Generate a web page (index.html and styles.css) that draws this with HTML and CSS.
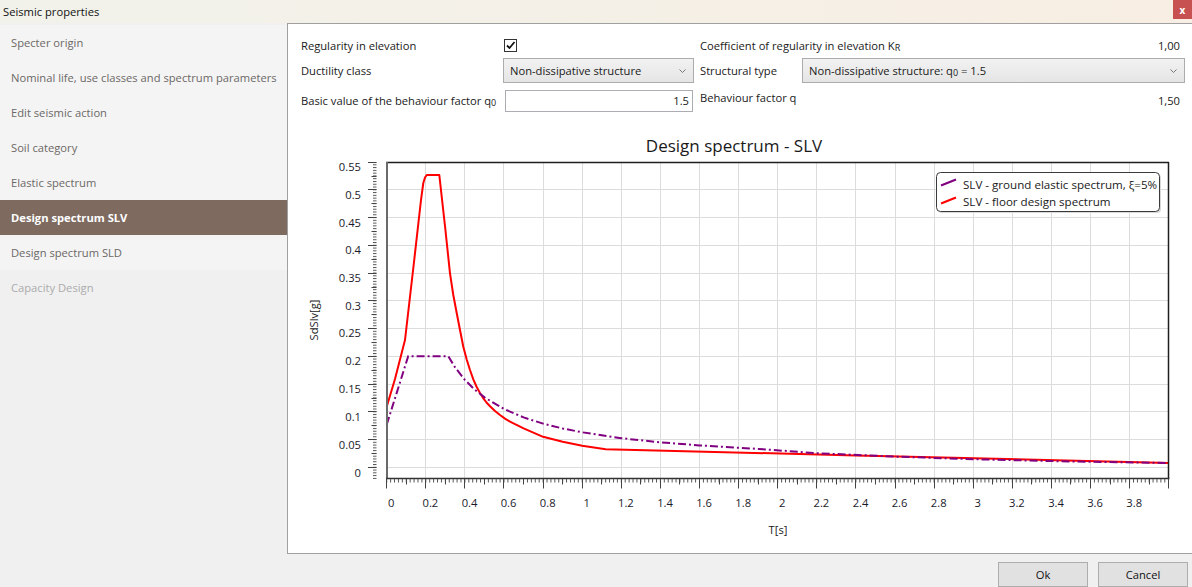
FILE: index.html
```html
<!DOCTYPE html>
<html>
<head>
<meta charset="utf-8">
<title>Seismic properties</title>
<link rel="stylesheet" href="styles.css">
</head>
<body>
<div class="window">
  <div class="titlebar">
    <span class="title">Seismic properties</span>
    <span class="close">x</span>
  </div>
  <div class="content">
    <nav class="sidebar">
      <div class="item">Specter origin</div>
      <div class="item">Nominal life, use classes and spectrum parameters</div>
      <div class="item">Edit seismic action</div>
      <div class="item">Soil category</div>
      <div class="item">Elastic spectrum</div>
      <div class="item selected">Design spectrum SLV</div>
      <div class="item">Design spectrum SLD</div>
      <div class="item disabled">Capacity Design</div>
    </nav>
    <main class="panel">
      <div class="form">
        <div class="label">Regularity in elevation</div>
        <div class="ctrl">
          <span class="checkbox"><svg width="11" height="11" viewBox="0 0 11 11"><path d="M2 5.5 L4.5 8 L9.5 2" fill="none" stroke="#111" stroke-width="1.8"/></svg></span>
        </div>
        <div class="label rlabel">Coefficient of regularity in elevation K<sub>R</sub></div>
        <div class="value">1,00</div>

        <div class="label">Ductility class</div>
        <div class="select"><span>Non-dissipative structure</span><svg class="chev" width="7" height="4" viewBox="0 0 7 4"><path d="M0.5 0.5 L3.5 3.5 L6.5 0.5" fill="none" stroke="#777" stroke-width="1"/></svg></div>
        <div class="label rlabel">Structural type</div>
        <div class="select wide"><span>Non-dissipative structure: q<sub>0</sub> = 1.5</span><svg class="chev" width="7" height="4" viewBox="0 0 7 4"><path d="M0.5 0.5 L3.5 3.5 L6.5 0.5" fill="none" stroke="#777" stroke-width="1"/></svg></div>

        <div class="label row3">Basic value of the behaviour factor q<sub>0</sub></div>
        <div class="input">1.5</div>
        <div class="label rlabel top">Behaviour factor q</div>
        <div class="value row3">1,50</div>
      </div>

      <svg class="chart" width="904" height="439" viewBox="288 113 904 439">
        <defs>
          <pattern id="yminor" patternUnits="userSpaceOnUse" x="0" y="466.8" width="10" height="2.775">
            <rect x="0" y="0" width="10" height="1" fill="#555"/>
          </pattern>
          <pattern id="xminor" patternUnits="userSpaceOnUse" x="386.2" y="0" width="3.91" height="10">
            <rect x="0" y="0" width="1" height="10" fill="#555"/>
          </pattern>
        </defs>

        <text class="ctitle" x="734" y="152" text-anchor="middle">Design spectrum - SLV</text>

        <path class="grid" d="M425.5 162V478M464.5 162V478M503.5 162V478M543.5 162V478M582.5 162V478M621.5 162V478M660.5 162V478M699.5 162V478M738.5 162V478M777.5 162V478M816.5 162V478M855.5 162V478M895.5 162V478M934.5 162V478M973.5 162V478M1012.5 162V478M1051.5 162V478M1090.5 162V478M1129.5 162V478M387 467.5H1169M387 439.5H1169M387 411.5H1169M387 384.5H1169M387 356.5H1169M387 328.5H1169M387 300.5H1169M387 273.5H1169M387 245.5H1169M387 217.5H1169M387 189.5H1169"/>

        <polyline class="red" points="386.7,406.8 395,379 405,340 414,262 421,200 423.3,183 425,177.5 426.7,175 439.3,175 445,226 450,273.3 453.3,295 456.7,313 460,330 463.3,346.7 466.7,359.5 470,370 473.3,379.3 476.7,387 480,393 483,397.8 486.5,402.5 490,406.3 495,411 500,415 505,418.6 510,421.7 523.6,428.4 543.1,436.8 562.7,441.8 582.2,445.7 605.7,449.3 855.9,455.4 1168.7,462.9"/>
        <polyline class="purple" points="386.7,424.6 408.2,356.3 448.3,356.3 455.1,367.4 464.9,379.9 474.7,389.6 484.5,397.4 504,409 523.6,417.4 543.1,423.6 562.7,428.5 582.2,432.3 621.3,438.2 660.4,442.3 699.5,445.4 758.2,448.9 816.8,453.2 895,456.6 973.2,459.2 1071,461.5 1168.7,463"/>

        <path class="frame" d="M386 162.5H1169M1168.5 162V478"/>
        <path class="frame-left" d="M387 162V478"/>
        <path class="xaxis" d="M386 478.5H1169.5"/>

        <rect x="373" y="162" width="3.5" height="317" fill="url(#yminor)"/>
        <path class="tick" d="M368 467.5H376.5M368 439.5H376.5M368 411.5H376.5M368 384.5H376.5M368 356.5H376.5M368 328.5H376.5M368 300.5H376.5M368 273.5H376.5M368 245.5H376.5M368 217.5H376.5M368 189.5H376.5M368 162.5H376.5M371.5 453.5H376.5M371.5 425.5H376.5M371.5 398.5H376.5M371.5 370.5H376.5M371.5 342.5H376.5M371.5 314.5H376.5M371.5 287.5H376.5M371.5 259.5H376.5M371.5 231.5H376.5M371.5 203.5H376.5M371.5 176.5H376.5"/>

        <rect x="386" y="479" width="783" height="3.5" fill="url(#xminor)"/>
        <path class="tick" d="M386.5 479V488.5M425.5 479V488.5M464.5 479V488.5M503.5 479V488.5M543.5 479V488.5M582.5 479V488.5M621.5 479V488.5M660.5 479V488.5M699.5 479V488.5M738.5 479V488.5M777.5 479V488.5M816.5 479V488.5M855.5 479V488.5M895.5 479V488.5M934.5 479V488.5M973.5 479V488.5M1012.5 479V488.5M1051.5 479V488.5M1090.5 479V488.5M1129.5 479V488.5M1168.5 479V488.5M406.5 479V484.5M445.5 479V484.5M484.5 479V484.5M523.5 479V484.5M562.5 479V484.5M601.5 479V484.5M640.5 479V484.5M679.5 479V484.5M719.5 479V484.5M758.5 479V484.5M797.5 479V484.5M836.5 479V484.5M875.5 479V484.5M914.5 479V484.5M953.5 479V484.5M992.5 479V484.5M1031.5 479V484.5M1070.5 479V484.5M1110.5 479V484.5M1149.5 479V484.5"/>

        <g class="ylabels" text-anchor="end">
          <text x="361" y="171">0.55</text>
          <text x="361" y="199">0.5</text>
          <text x="361" y="227">0.45</text>
          <text x="361" y="254">0.4</text>
          <text x="361" y="282">0.35</text>
          <text x="361" y="310">0.3</text>
          <text x="361" y="337">0.25</text>
          <text x="361" y="365">0.2</text>
          <text x="361" y="393">0.15</text>
          <text x="361" y="421">0.1</text>
          <text x="361" y="448.5">0.05</text>
          <text x="361" y="476.5">0</text>
        </g>
        <g class="xlabels" text-anchor="middle">
          <text x="391.3" y="507">0</text>
          <text x="430.4" y="507">0.2</text>
          <text x="469.5" y="507">0.4</text>
          <text x="508.6" y="507">0.6</text>
          <text x="547.7" y="507">0.8</text>
          <text x="586.8" y="507">1</text>
          <text x="625.9" y="507">1.2</text>
          <text x="665" y="507">1.4</text>
          <text x="704.1" y="507">1.6</text>
          <text x="743.2" y="507">1.8</text>
          <text x="782.3" y="507">2</text>
          <text x="821.4" y="507">2.2</text>
          <text x="860.5" y="507">2.4</text>
          <text x="899.6" y="507">2.6</text>
          <text x="938.7" y="507">2.8</text>
          <text x="977.8" y="507">3</text>
          <text x="1016.9" y="507">3.2</text>
          <text x="1056" y="507">3.4</text>
          <text x="1095.1" y="507">3.6</text>
          <text x="1134.2" y="507">3.8</text>
        </g>

        <text class="atitle" x="778" y="534" text-anchor="middle">T[s]</text>
        <text class="atitle" transform="translate(317.5 320) rotate(-90)" text-anchor="middle">SdSlv[g]</text>

        <rect class="legend-shadow" x="938" y="174" width="223" height="39" rx="4"/>
        <rect class="legend" x="936.5" y="172.5" width="223" height="39" rx="4"/>
        <line class="leg-purple" x1="941" y1="185.5" x2="956" y2="179.5"/>
        <text class="legtext" x="963" y="188.5">SLV - ground elastic spectrum, ξ=5%</text>
        <line class="leg-red" x1="941" y1="203.5" x2="956" y2="197.5"/>
        <text class="legtext" x="963" y="206">SLV - floor design spectrum</text>
      </svg>
    </main>
  </div>
  <div class="footer">
    <button class="btn">Ok</button>
    <button class="btn">Cancel</button>
  </div>
</div>
</body>
</html>
```

FILE: styles.css
```css
html, body {
  margin: 0;
  padding: 0;
}

body {
  width: 1192px;
  height: 587px;
  overflow: hidden;
  background: #f0f0f0;
  font-family: "Open Sans", "Noto Sans", sans-serif;
  font-size: 11.2px;
  color: #1a1a1a;
}

.window {
  display: flex;
  flex-direction: column;
  height: 587px;
}

.titlebar {
  height: 23px;
  display: flex;
  justify-content: space-between;
  align-items: center;
  background: linear-gradient(to right, #f1f2ea, #f8eee3);
}

.title {
  padding-left: 3px;
  color: #111;
  font-size: 11.2px;
}

.close {
  align-self: flex-start;
  width: 19px;
  height: 19px;
  background: #c75050;
  color: #fff;
  font-weight: bold;
  font-size: 10px;
  display: flex;
  align-items: center;
  justify-content: center;
}

.content {
  display: flex;
  height: 531px;
}

.sidebar {
  width: 287px;
  flex: none;
  padding-top: 2px;
  box-sizing: border-box;
}

.item {
  height: 35px;
  line-height: 35px;
  padding-left: 11px;
  background: #f4f4f4;
  color: #6c6866;
  white-space: nowrap;
}

.item.selected {
  background: #7e6a5f;
  color: #fff;
  font-weight: bold;
}

.item.disabled {
  background: transparent;
  color: #ababab;
}

.panel {
  flex: 1;
  background: #fff;
  border: 1px solid #a0a0a0;
  border-right: 0;
  display: flex;
  flex-direction: column;
}

.form {
  display: grid;
  grid-template-columns: 202px 191px 108px 1fr;
  grid-template-rows: 24px 26px 30px;
  padding: 9px 7px 0 13px;
  align-items: center;
}

.form sub {
  font-size: 9px;
  vertical-align: -1px;
  line-height: 0;
}

.label {
  white-space: nowrap;
}

.rlabel {
  padding-left: 6px;
}

.ctrl {
  display: flex;
  align-items: center;
}

.checkbox {
  margin-left: 1px;
  width: 11px;
  height: 11px;
  border: 1px solid #333;
  background: #fff;
  display: flex;
}

.value {
  text-align: right;
  padding-right: 5px;
}

.select {
  align-self: end;
  height: 25px;
  box-sizing: border-box;
  border: 1px solid #acacac;
  background: linear-gradient(#f2f2f2, #e5e5e5);
  display: flex;
  align-items: center;
  justify-content: space-between;
  padding: 0 7px 0 6px;
  white-space: nowrap;
}

.chev {
  display: block;
}

.row3 {
  align-self: end;
  margin-bottom: 1px;
  line-height: 22px;
}

.input {
  align-self: end;
  margin: 0 1px 1px 2px;
  height: 22px;
  box-sizing: border-box;
  border: 1px solid #abadb3;
  background: #fff;
  text-align: right;
  padding-right: 3px;
  line-height: 20px;
}

.top {
  align-self: start;
  padding-top: 7px;
  line-height: 16px;
}

.chart {
  display: block;
  font-family: "Open Sans", "Noto Sans", sans-serif;
}

.ctitle {
  font-size: 17px;
  fill: #1a1a1a;
}

.grid {
  stroke: #dcdcdc;
  stroke-width: 1;
  fill: none;
}

.red {
  fill: none;
  stroke: #ff0000;
  stroke-width: 2;
  stroke-linejoin: round;
}

.purple {
  fill: none;
  stroke: #800080;
  stroke-width: 2;
  stroke-dasharray: 8 3 2 3;
}

.frame {
  stroke: #1e1e1e;
  stroke-width: 1.5;
  fill: none;
}

.frame-left {
  stroke: #6a6a6a;
  stroke-width: 2;
  fill: none;
}

.xaxis {
  stroke: #333;
  stroke-width: 1.5;
  fill: none;
}

.tick {
  stroke: #444;
  stroke-width: 1;
  fill: none;
}

.ylabels text,
.xlabels text {
  font-size: 11.2px;
  fill: #1a1a2a;
}

.atitle {
  font-size: 11.2px;
  fill: #1a1a1a;
}

.legend-shadow {
  fill: #d8d8d8;
}

.legend {
  fill: #fff;
  stroke: #3a3a3a;
  stroke-width: 1;
}

.leg-purple {
  stroke: #800080;
  stroke-width: 2;
}

.leg-red {
  stroke: #ff0000;
  stroke-width: 2;
}

.legtext {
  font-size: 11.6px;
  fill: #1a1a1a;
}

.footer {
  flex: 1;
  display: flex;
  justify-content: flex-end;
  align-items: flex-start;
  gap: 10px;
  padding: 8px 4px 0 0;
}

.btn {
  width: 90px;
  height: 25px;
  border: 1px solid #adadad;
  background: #e1e1e1;
  font-family: "Open Sans", "Noto Sans", sans-serif;
  font-size: 11.2px;
  color: #111;
  padding: 0;
}
```
